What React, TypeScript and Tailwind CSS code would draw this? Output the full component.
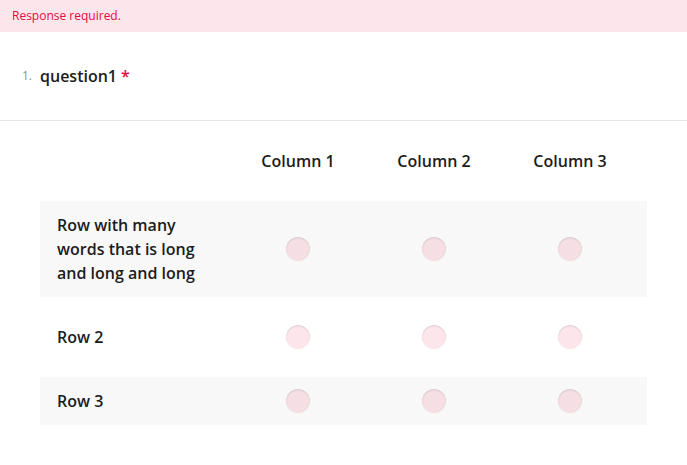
const columns = ['Column 1', 'Column 2', 'Column 3']

const rows = [
  { label: 'Row with many words that is long and long and long', cls: 'bg-[#f8f8f8] py-3' },
  { label: 'Row 2', cls: 'bg-white py-7' },
  { label: 'Row 3', cls: 'bg-[#f8f8f8] py-3' },
]

function Radio() {
  return (
    <span className="block h-6 w-6 rounded-full bg-[rgba(230,10,62,0.1)] shadow-[inset_0_1px_2px_rgba(0,0,0,0.12)]" />
  )
}

export default function App() {
  return (
    <div
      className="min-h-[465px] w-full bg-white text-[#1c1c1c]"
      style={{ fontFamily: '"Open Sans", "Liberation Sans", sans-serif' }}
    >
      {/* Error banner */}
      <div className="flex h-8 items-center bg-[rgba(230,10,62,0.1)] pl-3 text-xs text-[#e60a3e]">
        Response required.
      </div>

      {/* Question title */}
      <div className="flex h-[89px] items-center border-b border-[#e6e6e6] pl-[22px]">
        <span className="w-[18px] text-xs text-[#909090]">1.</span>
        <span className="text-base font-semibold leading-6">question1</span>
        <span className="ml-1 text-base font-semibold leading-6 text-[#e60a3e]">*</span>
      </div>

      {/* Matrix */}
      <div className="px-10">
        <div className="grid h-20 grid-cols-[190px_repeat(3,136px)_1fr] items-center">
          <div />
          {columns.map((c) => (
            <div key={c} className="text-center text-base font-semibold leading-6">
              {c}
            </div>
          ))}
          <div />
        </div>

        {rows.map((r) => (
          <div
            key={r.label}
            className={`grid grid-cols-[190px_repeat(3,136px)_1fr] items-center ${r.cls}`}
          >
            <div className="pl-[17px] pr-6 text-base font-semibold leading-6">{r.label}</div>
            {columns.map((c) => (
              <div key={c} className="flex justify-center">
                <Radio />
              </div>
            ))}
            <div />
          </div>
        ))}
      </div>
    </div>
  )
}
